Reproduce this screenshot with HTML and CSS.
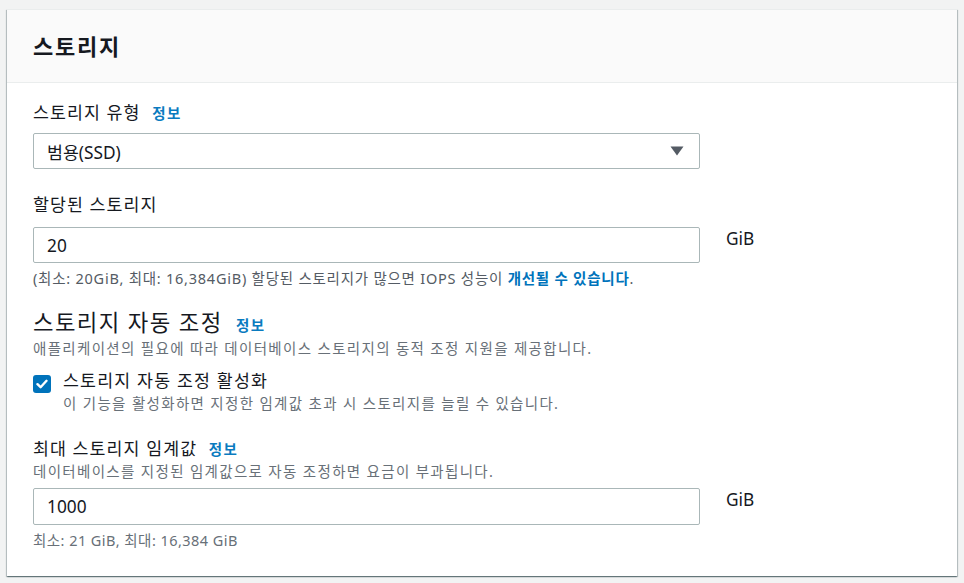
FILE: index.html
```html
<!DOCTYPE html>
<html lang="ko">
<head>
<meta charset="utf-8">
<link rel="stylesheet" href="styles.css">
</head>
<body>
<div class="card">
  <div class="card-header"><h2 class="card-title">스토리지</h2></div>
  <div class="card-body">
    <div class="field f-type">
      <div class="label">스토리지 유형 <a class="info">정보</a></div>
      <div class="control-row">
        <div class="select">
          <span>범용(SSD)</span>
          <svg class="caret" width="14" height="10" viewBox="0 0 14 10"><path d="M0.5 0.5 H13.5 L7 9.5 Z" fill="#545b64"/></svg>
        </div>
      </div>
    </div>
    <div class="field f-alloc">
      <div class="label">할당된 스토리지</div>
      <div class="control-row">
        <div class="input">20</div>
        <span class="unit">GiB</span>
      </div>
      <div class="constraint">(최소: 20GiB, 최대: 16,384GiB) 할당된 스토리지가 많으면 IOPS 성능이 <a class="strong-link">개선될 수 있습니다</a>.</div>
    </div>
    <div class="section">
      <div class="section-title">스토리지 자동 조정 <a class="info">정보</a></div>
      <div class="desc">애플리케이션의 필요에 따라 데이터베이스 스토리지의 동적 조정 지원을 제공합니다.</div>
      <div class="check-row">
        <span class="checkbox"><svg width="12" height="10" viewBox="0 0 12 10"><path d="M1.5 5.2 L4.6 8.2 L10.5 1.8" fill="none" stroke="#fff" stroke-width="2.4" stroke-linecap="round" stroke-linejoin="round"/></svg></span>
        <div class="check-text">
          <div class="check-label">스토리지 자동 조정 활성화</div>
          <div class="desc">이 기능을 활성화하면 지정한 임계값 초과 시 스토리지를 늘릴 수 있습니다.</div>
        </div>
      </div>
    </div>
    <div class="field f-max">
      <div class="label">최대 스토리지 임계값 <a class="info">정보</a></div>
      <div class="desc">데이터베이스를 지정된 임계값으로 자동 조정하면 요금이 부과됩니다.</div>
      <div class="control-row">
        <div class="input">1000</div>
        <span class="unit">GiB</span>
      </div>
      <div class="constraint light">최소: 21 GiB, 최대: 16,384 GiB</div>
    </div>
  </div>
</div>
</body>
</html>
```

FILE: styles.css
```css
html, body {
  margin: 0;
  padding: 0;
}
body {
  background: #f2f3f3;
  font-family: "Noto Sans", "Noto Sans CJK KR", sans-serif;
  color: #16191f;
  padding: 9px 7px 8px 7px;
}
.card {
  width: 950px;
  background: #fff;
  box-shadow: 0 1px 1px 0 rgba(0,28,36,0.35), 1px 1px 1px 0 rgba(0,28,36,0.2), -1px 1px 1px 0 rgba(0,28,36,0.2);
  border-top: 1px solid #eaeded;
}
.card-header {
  height: 72px;
  background: #fafafa;
  border-bottom: 1px solid #eaeded;
  display: flex;
  align-items: center;
  padding: 0 26px;
}
.card-title {
  margin: 0;
  font-size: 22px;
  font-weight: 700;
  line-height: 28px;
  letter-spacing: 1.8px;
  color: #16191f;
}
.card-body {
  padding: 18px 26px 26px 26px;
}
.label {
  font-size: 17.3px;
  line-height: 24px;
  letter-spacing: 1.1px;
  color: #16191f;
}
.info {
  font-size: 14.5px;
  font-weight: 700;
  letter-spacing: 1.4px;
  color: #0a7bbf;
  margin-left: 6px;
}
.control-row {
  display: flex;
  align-items: flex-start;
}
.select, .input {
  box-sizing: border-box;
  width: 667px;
  height: 36px;
  border: 1px solid #aab7b8;
  border-radius: 2px;
  display: flex;
  align-items: center;
  padding: 0 13px;
  font-size: 17.3px;
  color: #16191f;
}
.select span {
  flex: 1;
}
.caret {
  display: block;
  margin-right: 2px;
}
.unit {
  font-size: 17.3px;
  line-height: 24px;
  margin-left: 26px;
}
.f-type .control-row {
  margin-top: 8px;
}
.f-alloc {
  margin-top: 24px;
}
.f-alloc .control-row {
  margin-top: 10px;
}
.constraint {
  font-size: 14.5px;
  line-height: 20px;
  letter-spacing: 0.76px;
  color: #545b64;
  margin-top: 5px;
}
.constraint.light {
  color: #687078;
  margin-top: 5px;
  letter-spacing: 0.45px;
}
.strong-link {
  color: #0073bb;
  font-weight: 700;
}
.section {
  margin-top: 22px;
}
.section-title {
  font-size: 22.3px;
  line-height: 26px;
  letter-spacing: 1.4px;
}
.section-title .info {
  margin-left: 6px;
}
.desc {
  font-size: 14.5px;
  line-height: 20px;
  letter-spacing: 1.33px;
  color: #687078;
}
.check-row {
  display: flex;
  align-items: flex-start;
  margin-top: 11px;
}
.checkbox {
  width: 18px;
  height: 18px;
  border-radius: 3px;
  background: #0073bb;
  display: flex;
  align-items: center;
  justify-content: center;
  margin-top: 6px;
  flex: none;
}
.check-text {
  margin-left: 12px;
}
.check-label {
  font-size: 17.3px;
  line-height: 24px;
  letter-spacing: 1.2px;
}
.f-max {
  margin-top: 24px;
}
.f-max .control-row {
  margin-top: 7px;
}
.f-max .input {
  height: 37px;
}
```
